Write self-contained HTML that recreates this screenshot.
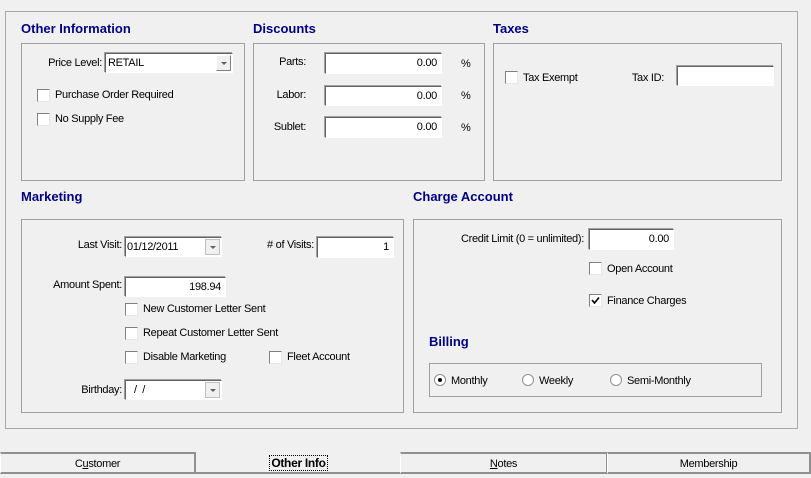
<!DOCTYPE html>
<html><head><style>
*{box-sizing:border-box;margin:0;padding:0}
body{width:811px;height:478px;background:#f0f0f0;position:relative;overflow:hidden;font-family:"Liberation Sans",Arial,sans-serif;font-size:11px;color:#000}
.a{position:absolute;white-space:nowrap;letter-spacing:-0.3px;line-height:13px}
.r{position:absolute;white-space:nowrap;letter-spacing:-0.3px;line-height:13px;text-align:right}
.g{position:absolute;border:1px solid #a0a0a0}
.t{position:absolute;font-weight:bold;font-size:13px;color:#000080;white-space:nowrap}
.in{position:absolute;background:#fff;border-top:1px solid #646464;border-left:1px solid #646464;border-right:1px solid #fff;border-bottom:1px solid #fff;box-shadow:-1px -1px 0 #a0a0a0;text-align:right;padding-right:4px;font-size:11px;letter-spacing:-0.3px}
.cb{position:absolute;width:13px;height:13px;background:#fff;border-top:1px solid #808080;border-left:1px solid #808080;border-right:1px solid #e8e8e8;border-bottom:1px solid #e8e8e8}
.rb{position:absolute;width:12px;height:12px;border-radius:50%;background:#fff;border:1px solid #909090}
.dd{position:absolute;right:1px;top:1px;width:15px;bottom:1px;background:#f0f0f0;border:1px solid #c0c0c0}
.dd:after{content:"";position:absolute;left:4px;top:6px;border-left:3px solid transparent;border-right:3px solid transparent;border-top:3px solid #606060}
.tab{position:absolute;top:452px;height:22px;border-top:2px solid #909090;border-bottom:2px solid #909090;border-left:1px solid #fff;border-right:2px solid #909090;text-align:center;line-height:21px;font-size:11px;letter-spacing:-0.3px}
</style></head><body>
<div class="g" style="left:5px;top:11px;width:793px;height:418px;border-color:#a8a8a8"></div>

<div class="t" style="left:21px;top:21px">Other Information</div>
<div class="g" style="left:21px;top:43px;width:224px;height:138px"></div>
<div class="r" style="right:709px;top:57px">Price Level:</div>
<div class="in" style="left:105px;top:53px;width:128px;height:20px;text-align:left;padding-left:2px;line-height:18px">RETAIL<div class="dd" style="border-color:#808080;border-left-color:#fff;border-top-color:#fff"></div></div>
<div class="cb" style="left:37px;top:89px"></div><div class="a" style="left:55px;top:89px">Purchase Order Required</div>
<div class="cb" style="left:37px;top:113px"></div><div class="a" style="left:55px;top:113px">No Supply Fee</div>

<div class="t" style="left:253px;top:21px">Discounts</div>
<div class="g" style="left:253px;top:43px;width:232px;height:138px"></div>
<div class="r" style="right:505px;top:56px">Parts:</div>
<div class="in" style="left:325px;top:53px;width:117px;height:21px;line-height:19px">0.00</div><div class="a" style="left:461px;top:58px">%</div>
<div class="r" style="right:505px;top:89px">Labor:</div>
<div class="in" style="left:325px;top:86px;width:117px;height:20px;line-height:18px">0.00</div><div class="a" style="left:461px;top:90px">%</div>
<div class="r" style="right:505px;top:121px">Sublet:</div>
<div class="in" style="left:325px;top:117px;width:117px;height:21px;line-height:19px">0.00</div><div class="a" style="left:461px;top:122px">%</div>

<div class="t" style="left:493px;top:21px">Taxes</div>
<div class="g" style="left:493px;top:43px;width:289px;height:138px"></div>
<div class="cb" style="left:505px;top:71px"></div><div class="a" style="left:523px;top:72px">Tax Exempt</div>
<div class="r" style="right:147px;top:72px">Tax ID:</div>
<div class="in" style="left:677px;top:66px;width:97px;height:20px"></div>

<div class="t" style="left:21px;top:189px">Marketing</div>
<div class="g" style="left:21px;top:219px;width:383px;height:194px"></div>
<div class="r" style="right:689px;top:239px">Last Visit:</div>
<div class="in" style="left:125px;top:237px;width:97px;height:20px;text-align:left;padding-left:1px;line-height:18px">01/12/2011<div class="dd"></div></div>
<div class="r" style="right:497px;top:239px"># of Visits:</div>
<div class="in" style="left:317px;top:237px;width:77px;height:21px;line-height:19px">1</div>
<div class="r" style="right:689px;top:279px">Amount Spent:</div>
<div class="in" style="left:125px;top:277px;width:101px;height:20px;line-height:18px">198.94</div>
<div class="cb" style="left:125px;top:303px"></div><div class="a" style="left:143px;top:303px">New Customer Letter Sent</div>
<div class="cb" style="left:125px;top:327px"></div><div class="a" style="left:143px;top:327px">Repeat Customer Letter Sent</div>
<div class="cb" style="left:125px;top:351px"></div><div class="a" style="left:143px;top:351px">Disable Marketing</div>
<div class="cb" style="left:269px;top:351px"></div><div class="a" style="left:287px;top:351px">Fleet Account</div>
<div class="r" style="right:689px;top:384px">Birthday:</div>
<div class="in" style="left:125px;top:380px;width:97px;height:20px;text-align:left;padding-left:8px;line-height:18px">/ &nbsp;/<div class="dd"></div></div>

<div class="t" style="left:413px;top:189px">Charge Account</div>
<div class="g" style="left:413px;top:219px;width:369px;height:194px"></div>
<div class="r" style="right:227px;top:233px">Credit Limit (0 = unlimited):</div>
<div class="in" style="left:589px;top:229px;width:85px;height:21px;line-height:19px">0.00</div>
<div class="cb" style="left:589px;top:262px"></div><div class="a" style="left:607px;top:263px">Open Account</div>
<div class="cb" style="left:589px;top:294px"><svg width="11" height="11" style="position:absolute;left:0;top:0"><path d="M2 5 L4.5 8 L9 2.5" stroke="#000" stroke-width="1.6" fill="none"/></svg></div><div class="a" style="left:607px;top:295px">Finance Charges</div>

<div class="t" style="left:429px;top:334px">Billing</div>
<div class="g" style="left:429px;top:363px;width:333px;height:34px"></div>
<div class="rb" style="left:434px;top:374px"><div style="position:absolute;left:3px;top:3px;width:4px;height:4px;border-radius:50%;background:#000"></div></div><div class="a" style="left:451px;top:375px">Monthly</div>
<div class="rb" style="left:522px;top:374px"></div><div class="a" style="left:539px;top:375px">Weekly</div>
<div class="rb" style="left:610px;top:374px"></div><div class="a" style="left:627px;top:375px">Semi-Monthly</div>

<div class="tab" style="left:0;width:196px;line-height:20px">C<u>u</u>stomer</div>
<div class="tab" style="left:196px;width:205px;border-top:none;border-left:none;border-right:none;top:452px;line-height:22px"><span style="font-weight:bold;font-size:12px;outline:1px dotted #000;padding:0 1px">Other Info</span></div>
<div class="tab" style="left:400px;width:208px;line-height:20px"><u>N</u>otes</div>
<div class="tab" style="left:607px;width:204px;line-height:20px">Membership</div>
</body></html>
